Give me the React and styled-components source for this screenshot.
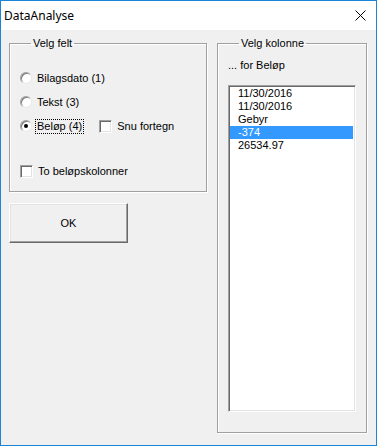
import React, { useState } from 'react';
import styled, { createGlobalStyle } from 'styled-components';

const GlobalStyle = createGlobalStyle`
  body {
    margin: 0;
    background: #f0f0f0;
    font-family: "Liberation Sans", Arial, sans-serif;
  }
`;

const Window = styled.div`
  box-sizing: border-box;
  width: 377px;
  height: 446px;
  border: 1px solid #1a85d8;
  background: #f0f0f0;
  display: flex;
  flex-direction: column;
  font-size: 11px;
  color: #000;
`;

const TitleBar = styled.div`
  height: 29px;
  background: #fff;
  display: flex;
  align-items: center;
  justify-content: space-between;
  padding: 0 10px 0 3px;
  flex-shrink: 0;
`;

const Title = styled.span`
  font-family: "Noto Sans", "Open Sans", sans-serif;
  font-size: 12px;
`;

const Body = styled.div`
  display: flex;
  gap: 10px;
  padding: 7px 9px 0 8px;
`;

const Column = styled.div`
  display: flex;
  flex-direction: column;
  width: ${({ w }) => w}px;
`;

const Frame = styled.fieldset`
  box-sizing: border-box;
  margin: 0;
  padding: ${({ pad }) => pad};
  height: ${({ h }) => h}px;
  border: 1px solid #a0a0a0;
  box-shadow: inset 1px 1px 0 #fff, 1px 1px 0 #fff;
  min-width: 0;
`;

const Legend = styled.legend`
  margin-left: 11px;
  padding: 0 2px;
  line-height: 13px;
`;

const Options = styled.div`
  display: flex;
  flex-direction: column;
  gap: 8px;
  padding-top: 20px;
`;

const Row = styled.div`
  display: flex;
  align-items: center;
  height: 16px;
  margin-top: ${({ mt }) => mt || 0}px;
`;

const Choice = styled.label`
  display: flex;
  align-items: center;
  gap: 3px;
  cursor: default;
  margin-right: ${({ mr }) => mr || 0}px;
`;

const RadioDot = styled.span`
  box-sizing: border-box;
  width: 12px;
  height: 12px;
  border-radius: 50%;
  background: #fff;
  border: 1px solid;
  border-color: #a0a0a0 #e8e8e8 #e8e8e8 #a0a0a0;
  box-shadow: inset 1px 1px 0 #7a7a7a;
  display: flex;
  align-items: center;
  justify-content: center;
  margin-right: 1px;

  &::after {
    content: '';
    width: 4px;
    height: 4px;
    border-radius: 50%;
    background: ${({ on }) => (on ? '#000' : 'transparent')};
  }
`;

const Box = styled.span`
  box-sizing: border-box;
  width: 13px;
  height: 13px;
  background: #fff;
  border: 1px solid;
  border-color: #a0a0a0 #fff #fff #a0a0a0;
  box-shadow: inset 1px 1px 0 #696969, inset -1px -1px 0 #e3e3e3;
  margin-right: 1px;
`;

const Text = styled.span`
  line-height: 13px;
  padding: 0 1px;
  outline: ${({ focus }) => (focus ? '1px dotted #000' : 'none')};
`;

const OkButton = styled.button`
  box-sizing: border-box;
  width: 119px;
  height: 40px;
  margin-top: 11px;
  background: #f0f0f0;
  border: 1px solid;
  border-color: #fff #696969 #696969 #fff;
  box-shadow: inset -1px -1px 0 #a0a0a0, inset 1px 1px 0 #e3e3e3;
  font-family: "Liberation Sans", Arial, sans-serif;
  font-size: 11px;
  color: #000;
  padding: 0;
`;

const Caption = styled.div`
  padding: 9px 0 0 0;
  line-height: 13px;
`;

const ListBox = styled.div`
  box-sizing: border-box;
  margin-top: 13px;
  height: 327px;
  background: #fff;
  border: 1px solid;
  border-color: #a0a0a0 #fff #fff #a0a0a0;
  box-shadow: inset 1px 1px 0 #696969, inset -1px -1px 0 #e3e3e3;
  padding: 1px 2px 1px 1px;
`;

const Item = styled.div`
  height: 13px;
  line-height: 13px;
  padding-left: 8px;
  background: ${({ selected }) => (selected ? '#3399ff' : 'transparent')};
  color: ${({ selected }) => (selected ? '#fff' : '#000')};
`;

const CloseIcon = () => (
  <svg width="11" height="11" viewBox="0 0 11 11">
    <path d="M0.5 0.5 L10.5 10.5 M10.5 0.5 L0.5 10.5" stroke="#000" strokeWidth="1" />
  </svg>
);

const items = ['11/30/2016', '11/30/2016', 'Gebyr', '-374', '26534.97'];

export default function App() {
  const [field, setField] = useState(3);
  const [selected, setSelected] = useState(3);

  return (
    <>
      <GlobalStyle />
      <Window>
        <TitleBar>
          <Title>DataAnalyse</Title>
          <CloseIcon />
        </TitleBar>
        <Body>
          <Column w={198}>
            <Frame h={155} pad="0 0 0 10px">
              <Legend>Velg felt</Legend>
              <Options>
                <Row>
                  <Choice onClick={() => setField(1)}>
                    <RadioDot on={field === 1} />
                    <Text>Bilagsdato (1)</Text>
                  </Choice>
                </Row>
                <Row>
                  <Choice onClick={() => setField(2)}>
                    <RadioDot on={field === 2} />
                    <Text>Tekst (3)</Text>
                  </Choice>
                </Row>
                <Row>
                  <Choice mr={16} onClick={() => setField(3)}>
                    <RadioDot on={field === 3} />
                    <Text focus={field === 3}>Beløp (4)</Text>
                  </Choice>
                  <Choice>
                    <Box />
                    <Text>Snu fortegn</Text>
                  </Choice>
                </Row>
                <Row mt={21}>
                  <Choice>
                    <Box />
                    <Text>To beløpskolonner</Text>
                  </Choice>
                </Row>
              </Options>
            </Frame>
            <OkButton>OK</OkButton>
          </Column>
          <Column w={150}>
            <Frame h={396} pad="0 10px 0 10px">
              <Legend>Velg kolonne</Legend>
              <Caption>... for Beløp</Caption>
              <ListBox>
                {items.map((it, i) => (
                  <Item key={i} selected={i === selected} onClick={() => setSelected(i)}>
                    {it}
                  </Item>
                ))}
              </ListBox>
            </Frame>
          </Column>
        </Body>
      </Window>
    </>
  );
}
